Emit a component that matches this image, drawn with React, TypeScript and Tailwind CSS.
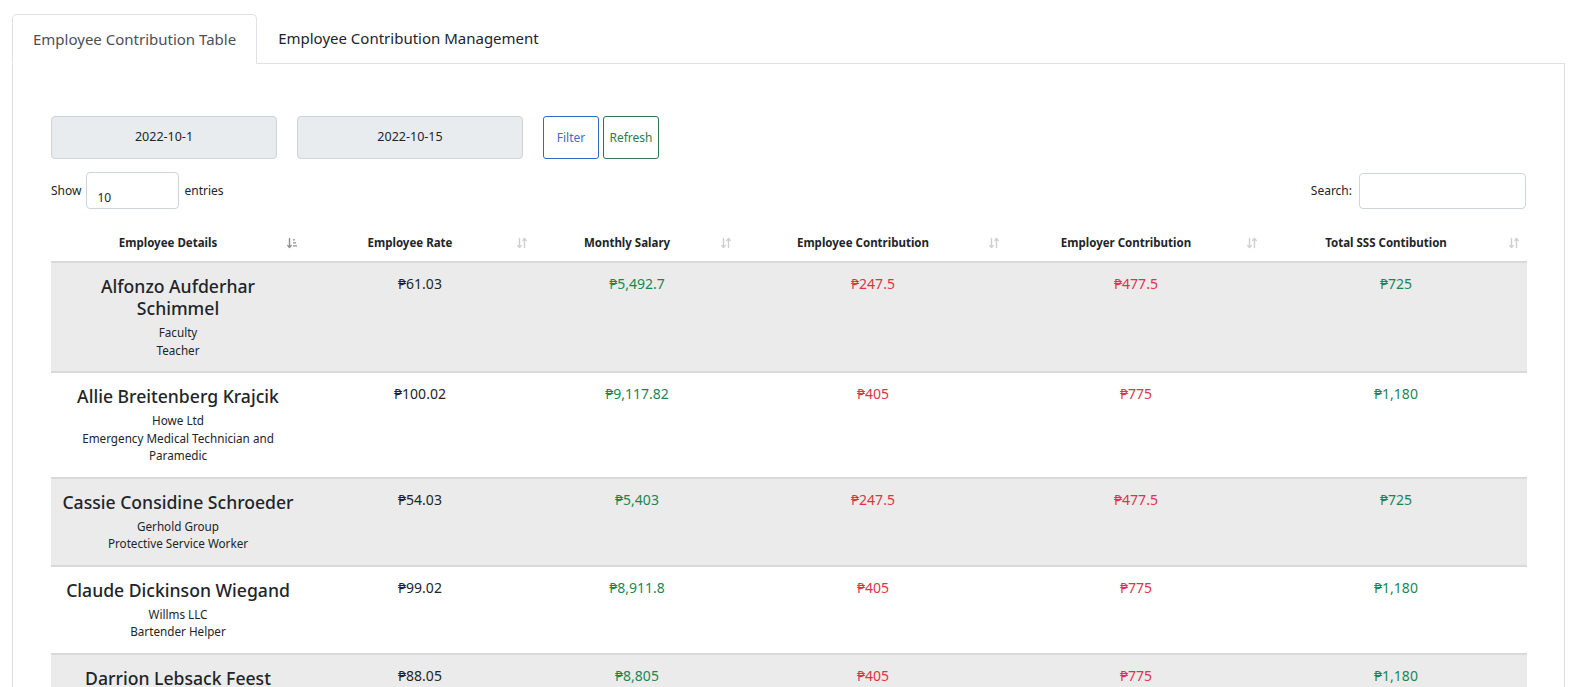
import React from "react";

type Row = {
  name: string[];
  sub: string[];
  rate: string;
  salary: string;
  ee: string;
  er: string;
  total: string;
};

const rows: Row[] = [
  { name: ["Alfonzo Aufderhar", "Schimmel"], sub: ["Faculty", "Teacher"], rate: "₱61.03", salary: "₱5,492.7", ee: "₱247.5", er: "₱477.5", total: "₱725" },
  { name: ["Allie Breitenberg Krajcik"], sub: ["Howe Ltd", "Emergency Medical Technician and", "Paramedic"], rate: "₱100.02", salary: "₱9,117.82", ee: "₱405", er: "₱775", total: "₱1,180" },
  { name: ["Cassie Considine Schroeder"], sub: ["Gerhold Group", "Protective Service Worker"], rate: "₱54.03", salary: "₱5,403", ee: "₱247.5", er: "₱477.5", total: "₱725" },
  { name: ["Claude Dickinson Wiegand"], sub: ["Willms LLC", "Bartender Helper"], rate: "₱99.02", salary: "₱8,911.8", ee: "₱405", er: "₱775", total: "₱1,180" },
  { name: ["Darrion Lebsack Feest"], sub: ["Kuhn Inc", "Sales Representative"], rate: "₱88.05", salary: "₱8,805", ee: "₱405", er: "₱775", total: "₱1,180" },
];

function SortIcon() {
  return (
    <svg width="10" height="12" viewBox="0 0 10 12" className="shrink-0">
      <g stroke="#cfcfcf" strokeWidth="1.4" fill="none" strokeLinecap="round" strokeLinejoin="round">
        <path d="M2.5 1.5 V10.5 M0.8 8.6 L2.5 10.5 L4.2 8.6" />
        <path d="M7.5 10.5 V1.5 M5.8 3.4 L7.5 1.5 L9.2 3.4" />
      </g>
    </svg>
  );
}

function SortActiveIcon() {
  return (
    <svg width="10" height="12" viewBox="0 0 10 12" className="shrink-0">
      <g stroke="#8f8f8f" strokeWidth="1.4" fill="none" strokeLinecap="round" strokeLinejoin="round">
        <path d="M2.5 1.5 V10.5 M0.8 8.6 L2.5 10.5 L4.2 8.6" />
      </g>
      <g fill="#a8a8a8">
        <rect x="6" y="2" width="2" height="1.6" />
        <rect x="6" y="5" width="3" height="1.6" />
        <rect x="6" y="8" width="4" height="1.6" />
      </g>
    </svg>
  );
}

const headers = [
  "Employee Details",
  "Employee Rate",
  "Monthly Salary",
  "Employee Contribution",
  "Employer Contribution",
  "Total SSS Contibution",
];

export default function App() {
  return (
    <div className="min-h-screen bg-white pt-[14px] pl-[12px] font-['Noto_Sans','Open_Sans',sans-serif] text-[#212529]">
      <div className="flex">
        <div className="relative z-10 -mb-px flex h-[50px] items-center rounded-t-[5px] border border-[#dee2e6] border-b-white bg-white px-[20px] text-[15px] text-[#495057]">
          Employee Contribution Table
        </div>
        <div className="flex h-[49px] items-center px-[21px] text-[15px] text-[#212529]">
          Employee Contribution Management
        </div>
      </div>
      <div className="w-[1553px] border border-[#dee2e6] px-[38px] pb-[40px] pt-[52px]">
        <div className="flex items-center">
          <div className="flex h-[43px] w-[226px] items-center justify-center rounded-[4px] border border-[#ced4da] bg-[#e9ecef] text-[12.5px]">
            2022-10-1
          </div>
          <div className="ml-[20px] flex h-[43px] w-[226px] items-center justify-center rounded-[4px] border border-[#ced4da] bg-[#e9ecef] text-[12.5px]">
            2022-10-15
          </div>
          <div className="ml-[20px] flex h-[43px] w-[56px] items-center justify-center rounded-[3px] border border-[#2f6ac4] text-[12px] text-[#3a6fc8]">
            Filter
          </div>
          <div className="ml-[4px] flex h-[43px] w-[56px] items-center justify-center rounded-[3px] border border-[#2b7a4b] text-[12px] text-[#2f7a4e]">
            Refresh
          </div>
        </div>
        <div className="mt-[13px] flex items-center justify-between">
          <div className="flex items-center text-[12px]">
            <span>Show</span>
            <div className="ml-[5px] flex h-[37px] w-[93px] items-center rounded-[4px] border border-[#ced4da] pl-[10px] pt-[14px] text-[12px]">
              10
            </div>
            <span className="ml-[5px]">entries</span>
          </div>
          <div className="flex items-center text-[12px]">
            <span>Search:</span>
            <div className="ml-[7px] h-[36px] w-[167px] rounded-[4px] border border-[#ced4da]" />
          </div>
        </div>
        <table className="mt-[15px] w-[1476px] table-fixed border-collapse">
          <colgroup>
            <col className="w-[254px]" />
            <col className="w-[230px]" />
            <col className="w-[204px]" />
            <col className="w-[268px]" />
            <col className="w-[258px]" />
            <col className="w-[262px]" />
          </colgroup>
          <thead>
            <tr className="border-b-2 border-[#d9d9d9]">
              {headers.map((h, i) => (
                <th key={h} className="pb-[10px] pl-[10px] pr-[8px] pt-[10px] text-[11.5px] font-bold">
                  <div className="flex items-center">
                    <span className="flex-1 whitespace-nowrap text-center">{h}</span>
                    <span className="ml-[12px] flex">{i === 0 ? <SortActiveIcon /> : <SortIcon />}</span>
                  </div>
                </th>
              ))}
            </tr>
          </thead>
          <tbody>
            {rows.map((r, idx) => (
              <tr key={idx} className={`border-b-2 border-[#d9d9d9] ${idx % 2 === 0 ? "bg-[#ebebeb]" : "bg-white"}`}>
                <td className="px-[10px] py-[12px] text-center align-top">
                  {r.name.map((n) => (
                    <div key={n} className="whitespace-nowrap text-[17.6px] font-medium leading-[22px]">
                      {n}
                    </div>
                  ))}
                  <div className="mt-[5px]">
                    {r.sub.map((s) => (
                      <div key={s} className="whitespace-nowrap text-[11.7px] leading-[17.5px]">
                        {s}
                      </div>
                    ))}
                  </div>
                </td>
                <td className="px-[10px] pb-[12px] pt-[10px] text-center align-top text-[14px] leading-[22px]">{r.rate}</td>
                <td className="px-[10px] pb-[12px] pt-[10px] text-center align-top text-[14px] leading-[22px] text-[#198754]">{r.salary}</td>
                <td className="px-[10px] pb-[12px] pt-[10px] text-center align-top text-[14px] leading-[22px] text-[#dc3545]">{r.ee}</td>
                <td className="px-[10px] pb-[12px] pt-[10px] text-center align-top text-[14px] leading-[22px] text-[#dc3545]">{r.er}</td>
                <td className="px-[10px] pb-[12px] pt-[10px] text-center align-top text-[14px] leading-[22px] text-[#198754]">{r.total}</td>
              </tr>
            ))}
          </tbody>
        </table>
      </div>
    </div>
  );
}
